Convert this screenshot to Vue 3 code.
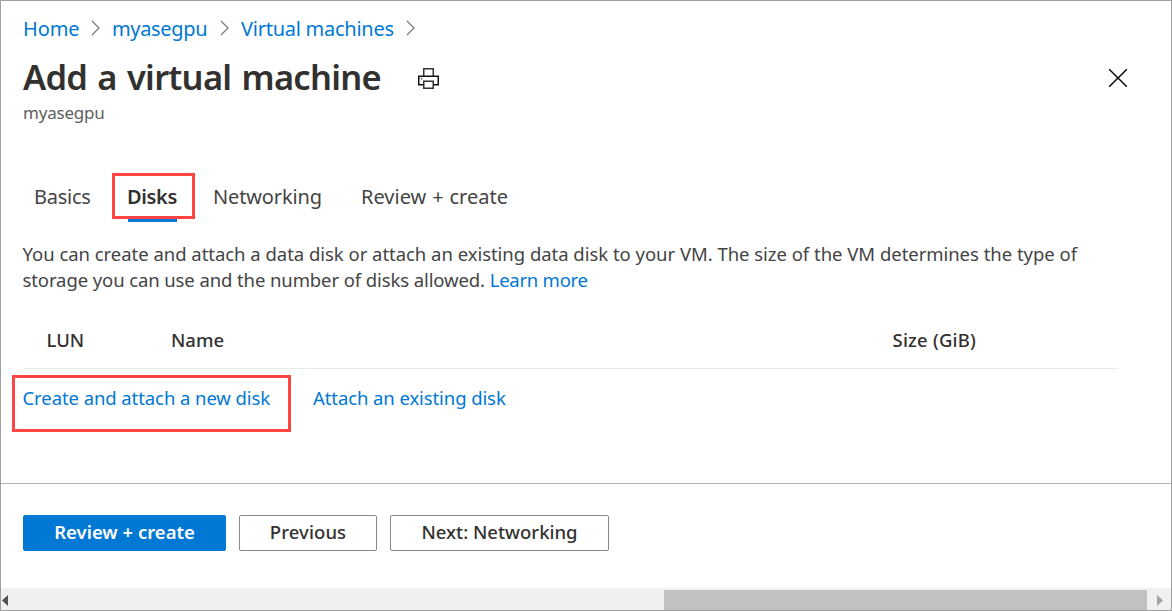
<script setup>
const crumbs = [
  { label: 'Home', cls: 'c-home' },
  { label: 'myasegpu', cls: 'c-device' },
  { label: 'Virtual machines', cls: 'c-vms' },
]
const tabs = [
  { label: 'Basics', cls: 't-basics' },
  { label: 'Disks', cls: 't-disks active' },
  { label: 'Networking', cls: 't-net' },
  { label: 'Review + create', cls: 't-review' },
]
</script>

<template>
  <div class="window">
    <nav class="crumbs">
      <template v-for="c in crumbs" :key="c.label">
        <a :class="['crumb', c.cls]">{{ c.label }}</a>
        <svg class="chevron" width="10" height="16" viewBox="0 0 10 16"><path d="M1 1 8 8 1 15" /></svg>
      </template>
    </nav>

    <header class="head">
      <h1>Add a virtual machine</h1>
      <svg class="print" width="21" height="21" viewBox="0 0 21 21">
        <path class="paper" d="M5.75 8V.75H15.25V8" />
        <path d="M5.5 16.75H.75V8.25H20.25V16.75H15.5" />
        <path class="paper" d="M5.75 13.25H15.25V20.25H5.75Z" />
        <rect class="lamp" x="2.8" y="10" width="1.4" height="1.4" />
      </svg>
      <svg class="close" width="20" height="20" viewBox="0 0 20 20"><path d="M1.2 1.2 18.8 18.8M18.8 1.2 1.2 18.8" /></svg>
    </header>
    <div class="sub">myasegpu</div>

    <div class="tabs">
      <a v-for="t in tabs" :key="t.label" :class="['tab', t.cls]">{{ t.label }}</a>
    </div>

    <p class="intro">
      <span class="l1">You can create and attach a data disk or attach an existing data disk to your VM. The size of the VM determines the type of</span><br />
      <span class="l2">storage you can use and the number of disks allowed. </span><a class="link learn">Learn more</a>
    </p>

    <div class="grid-head">
      <span>LUN</span><span class="name">Name</span><span class="size">Size (GiB)</span>
    </div>
    <div class="actions">
      <a class="link create">Create and attach a new disk</a>
      <a class="link attach">Attach an existing disk</a>
    </div>

    <footer class="footer">
      <button class="btn primary">Review + create</button>
      <button class="btn prev">Previous</button>
      <button class="btn next">Next: Networking</button>
    </footer>

    <div class="scroll">
      <svg class="arrow" width="6" height="11" viewBox="0 0 6 11"><path d="M6 0V11L0 5.5Z" fill="#505050" /></svg>
      <div class="thumb"></div>
      <svg class="arrow right" width="6" height="11" viewBox="0 0 6 11"><path d="M0 0V11L6 5.5Z" fill="#a3a3a3" /></svg>
    </div>
  </div>
</template>

<style>
body { background: #fff; }
</style>

<style scoped>
* { box-sizing: border-box; }
.window {
  width: 1172px;
  height: 611px;
  overflow: hidden;
  border: 1px solid #a0a0a0;
  background: #fff;
  color: #444;
  font-family: "Noto Sans", "Open Sans", sans-serif;
  font-size: 18.5px;
  white-space: nowrap;
  display: flex;
  flex-direction: column;
}
svg { display: block; flex: none; fill: none; }
.crumbs { display: flex; align-items: center; height: 30px; margin: 12px 0 0 22px; font-size: 20px; flex: none; }
.crumb { color: #0078d4; line-height: 30px; padding-top: 2px; }
.c-home { width: 68px; letter-spacing: -0.1px; }
.c-device { width: 108px; letter-spacing: -0.35px; }
.c-vms { width: 165px; letter-spacing: -0.25px; }
.chevron { margin-right: 11px; stroke: #767676; stroke-width: 1.2; }
.head { display: flex; align-items: center; height: 48px; margin: 10px 0 0 22px; padding-right: 43px; flex: none; }
h1 { margin: 0; width: 395px; font-size: 34.5px; line-height: 48px; font-weight: 600; letter-spacing: -0.75px; word-spacing: 2px; color: #323130; }
.print { stroke: #111; stroke-width: 1.5; margin-top: 2px; }
.paper { stroke: #333; }
.lamp { fill: #555; stroke: none; }
.close { margin-left: auto; margin-top: 1px; stroke: #000; stroke-width: 1.4; }
.sub { margin: 1px 0 0 22px; font-size: 17px; line-height: 22px; letter-spacing: -0.2px; color: #605e5c; flex: none; }
.tabs { display: flex; margin: 49px 0 0 19px; height: 49px; font-size: 20px; line-height: 48px; flex: none; }
.t-basics { width: 92px; padding-left: 14px; letter-spacing: -0.25px; }
.t-disks {
  position: relative;
  width: 83px;
  height: 46px;
  border: 3px solid #fc4444;
  padding-left: 12px;
  line-height: 42px;
  font-weight: 600;
  letter-spacing: -0.35px;
  color: #323130;
}
.t-disks::after { content: ""; position: absolute; left: 13px; top: 43px; width: 49px; height: 3px; background: #0078d4; }
.t-net { width: 148px; padding-left: 18px; letter-spacing: -0.15px; }
.t-review { padding-left: 18px; word-spacing: 0.7px; }
.intro { margin: 19px 0 0 21.5px; line-height: 26px; flex: none; }
.l1 { letter-spacing: -0.05px; word-spacing: 0.1px; }
.l2 { letter-spacing: -0.1px; }
.learn { letter-spacing: -0.25px; }
.link { color: #0078d4; }
.grid-head {
  display: grid;
  grid-template-columns: 124.5px 721.5px auto;
  margin: 19px 53px 0 22px;
  padding-left: 23.5px;
  height: 57px;
  line-height: 56px;
  border-bottom: 1px solid #eaeaea;
  font-weight: 500;
  color: #323130;
  flex: none;
}
.size { letter-spacing: 0.2px; }
.actions { display: flex; align-items: flex-start; margin: 6px 0 0 11px; height: 57px; flex: none; }
.create { width: 279px; height: 57px; border: 3px solid #fc4444; padding-left: 7.5px; line-height: 40px; letter-spacing: -0.08px; }
.attach { margin-left: 22px; line-height: 46px; letter-spacing: -0.09px; }
.footer { display: flex; gap: 13px; margin-top: 51px; border-top: 1px solid #b3b3b3; padding: 31px 0 0 22px; height: 105px; flex: none; }
.btn {
  height: 36px;
  border: 1px solid #8a8886;
  border-radius: 2px;
  padding: 0 0 2px;
  background: #fff;
  color: #323130;
  font: 500 18.5px/32px "Noto Sans", "Open Sans", sans-serif;
}
.primary { width: 203px; border-color: #0078d4; background: #0078d4; color: #fff; font-weight: 600; }
.prev { width: 138px; letter-spacing: 0.1px; }
.next { width: 219px; }
.scroll { display: flex; align-items: center; height: 22px; background: #f0f0f0; padding: 0 8px 0 1px; flex: none; }
.thumb { width: 483px; height: 20px; margin: 2px 0 0 auto; background: #c1c1c1; }
.arrow { margin-top: 3px; }
.right { margin-left: 10px; }
</style>
